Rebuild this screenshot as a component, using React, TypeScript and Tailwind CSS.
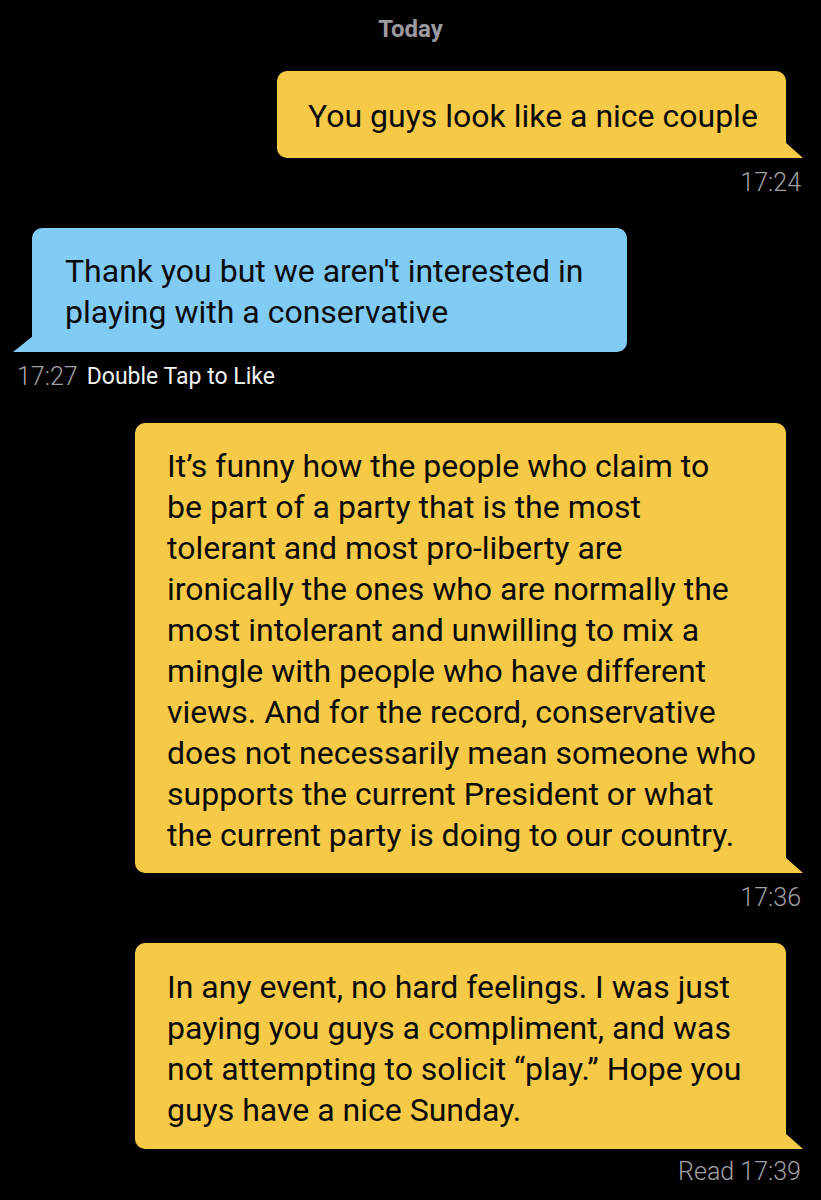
import React from "react";

const FONT = { fontFamily: "Roboto, 'Noto Sans', sans-serif" };

function TailRight({ color }: { color: string }) {
  return (
    <svg className="absolute right-[-17px] bottom-0" width="18" height="16" viewBox="0 0 18 16">
      <polygon points="0,0 18,16 0,16" fill={color} />
    </svg>
  );
}

function TailLeft({ color }: { color: string }) {
  return (
    <svg className="absolute left-[-19px] bottom-0" width="20" height="16" viewBox="0 0 20 16">
      <polygon points="20,0 20,16 0,16" fill={color} />
    </svg>
  );
}

function Lines({ lines }: { lines: string[] }) {
  return (
    <>
      {lines.map((l, i) => (
        <span key={i} className="block whitespace-nowrap">
          {l}
        </span>
      ))}
    </>
  );
}

export default function App() {
  return (
    <div className="w-[821px] h-[1200px] bg-black overflow-hidden flex flex-col" style={FONT}>
      <div className="mt-[16px] h-[26px] flex items-center justify-center text-[24px] font-bold text-[#9a9aa0]">
        Today
      </div>

      {/* bubble 1 */}
      <div className="mt-[29px] flex justify-end pr-[35px]">
        <div className="relative w-[509px] rounded-[10px] rounded-br-none bg-[#f6ca47] px-[31px] pt-[25px] pb-[21px] text-[32px] leading-[41px] text-[#0a0a0a]">
          <Lines lines={["You guys look like a nice couple"]} />
          <TailRight color="#f6ca47" />
        </div>
      </div>
      <div className="mt-[12px] h-[26px] flex items-center justify-end pr-[20px] text-[25px] font-light text-[#a0a0a5]">
        17:24
      </div>

      {/* bubble 2 */}
      <div className="mt-[32px] flex justify-start pl-[32px]">
        <div className="relative w-[595px] rounded-[10px] rounded-bl-none bg-[#80ccf5] px-[33px] pt-[23px] pb-[19px] text-[32px] leading-[41px] text-[#0a0a0a]">
          <Lines lines={["Thank you but we aren't interested in", "playing with a conservative"]} />
          <TailLeft color="#80ccf5" />
        </div>
      </div>
      <div className="mt-[12px] h-[26px] flex items-center pl-[17px] gap-[9px]">
        <span className="text-[25px] font-light text-[#a0a0a5]">17:27</span>
        <span className="text-[23px] text-[#f2f2f2]">Double Tap to Like</span>
      </div>

      {/* bubble 3 */}
      <div className="mt-[33px] flex justify-end pr-[35px]">
        <div className="relative w-[651px] rounded-[10px] rounded-br-none bg-[#f6ca47] px-[32px] pt-[23px] pb-[17px] text-[32px] leading-[41px] text-[#0a0a0a]">
          <Lines
            lines={[
              "It’s funny how the people who claim to",
              "be part of a party that is the most",
              "tolerant and most pro-liberty are",
              "ironically the ones who are normally the",
              "most intolerant and unwilling to mix a",
              "mingle with people who have different",
              "views. And for the record, conservative",
              "does not necessarily mean someone who",
              "supports the current President or what",
              "the current party is doing to our country.",
            ]}
          />
          <TailRight color="#f6ca47" />
        </div>
      </div>
      <div className="mt-[12px] h-[26px] flex items-center justify-end pr-[20px] text-[25px] font-light text-[#a0a0a5]">
        17:36
      </div>

      {/* bubble 4 */}
      <div className="mt-[32px] flex justify-end pr-[35px]">
        <div className="relative w-[651px] rounded-[10px] rounded-br-none bg-[#f6ca47] px-[32px] pt-[24px] pb-[18px] text-[32px] leading-[41px] text-[#0a0a0a]">
          <Lines
            lines={[
              "In any event, no hard feelings. I was just",
              "paying you guys a compliment, and was",
              "not attempting to solicit “play.” Hope you",
              "guys have a nice Sunday.",
            ]}
          />
          <TailRight color="#f6ca47" />
        </div>
      </div>
      <div className="mt-[10px] h-[26px] flex items-center justify-end pr-[20px] text-[25px] font-light text-[#a0a0a5]">
        Read 17:39
      </div>
    </div>
  );
}
